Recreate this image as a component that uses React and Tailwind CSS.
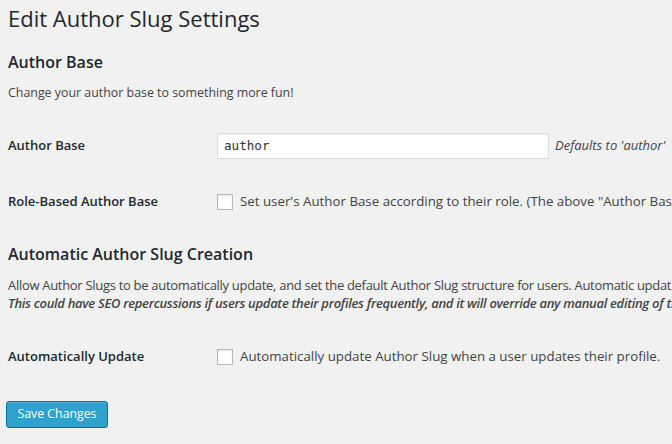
import React from "react";

const font = { fontFamily: '"Open Sans", sans-serif' };

function Row({ label, children, className = "" }) {
  return (
    <div className={`flex items-center ${className}`}>
      <div className="w-[209px] shrink-0 text-[13px] font-semibold text-[#23282d]">{label}</div>
      <div className="flex items-center whitespace-nowrap">{children}</div>
    </div>
  );
}

function Check({ text }) {
  return (
    <label className="flex items-center gap-[7px] text-[13.3px] text-[#444]">
      <span className="w-[16px] h-[16px] bg-white border border-[#b4b9be] shadow-[inset_0_1px_2px_rgba(0,0,0,0.1)]" />
      {text}
    </label>
  );
}

export default function App() {
  return (
    <div className="w-[672px] h-[444px] overflow-hidden bg-[#f1f1f1] text-[#444] whitespace-nowrap" style={font}>
      <div className="pl-[8px]">
        <h1 className="pt-[4px] text-[22px] leading-[29px] text-[#23282d]">Edit Author Slug Settings</h1>

        <h3 className="mt-[17px] text-[16px] leading-[24px] font-semibold text-[#23282d]">Author Base</h3>
        <p className="mt-[10px] text-[12.4px] leading-[18px]">Change your author base to something more fun!</p>

        <Row label="Author Base" className="mt-[31px]">
          <div className="w-[332px] h-[26px] bg-white border border-[#ddd] shadow-[inset_0_1px_2px_rgba(0,0,0,0.07)] flex items-center px-[6px] text-[12.6px] text-[#333]" style={{ fontFamily: '"DejaVu Sans Mono", monospace' }}>
            author
          </div>
          <span className="ml-[6px] text-[13px] italic text-[#444]">Defaults to 'author'</span>
        </Row>

        <Row label="Role-Based Author Base" className="mt-[33px]">
          <Check text={`Set user's Author Base according to their role. (The above "Author Base" setting will be used as the default.)`} />
        </Row>

        <h3 className="mt-[30px] text-[16px] leading-[24px] font-semibold text-[#23282d]">Automatic Author Slug Creation</h3>
        <p className="mt-[10px] text-[13px] leading-[18px] tracking-[-0.3px]">
          Allow Author Slugs to be automatically update, and set the default Author Slug structure for users. Automatic updating will only occur when a user can't edit Author Slugs on their own.
        </p>
        <p className="text-[13px] leading-[18px] italic font-semibold tracking-[-0.3px]">
          This could have SEO repercussions if users update their profiles frequently, and it will override any manual editing of the Author Slug you may have previously completed.
        </p>

        <Row label="Automatically Update" className="mt-[35px]">
          <Check text="Automatically update Author Slug when a user updates their profile." />
        </Row>

        <button className="mt-[34px] -ml-[2px] h-[27px] w-[102px] rounded-[3px] bg-[#2ea2cc] border border-[#0074a2] shadow-[inset_0_1px_0_rgba(120,200,230,0.5)] text-white text-[12.3px]">
          Save Changes
        </button>
      </div>
    </div>
  );
}
